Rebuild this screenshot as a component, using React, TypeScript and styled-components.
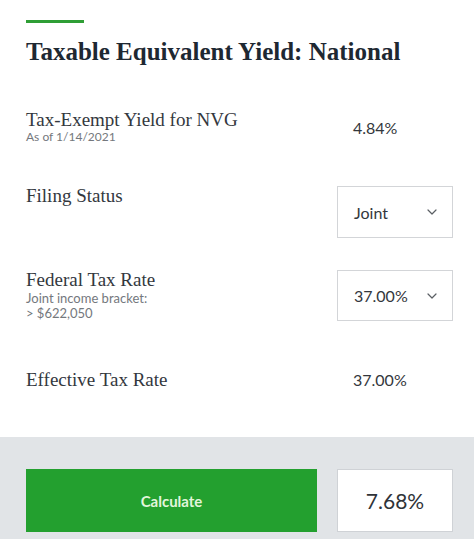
import React from "react";
import styled, { createGlobalStyle } from "styled-components";

const Global = createGlobalStyle`
  html, body { margin: 0; padding: 0; background: #ffffff; }
  body { font-family: "Lato", "Liberation Sans", sans-serif; }
  * { box-sizing: border-box; }
`;

const Page = styled.div`
  width: 474px;
  height: 539px;
  display: flex;
  flex-direction: column;
  background: #ffffff;
  overflow: hidden;
`;

const Main = styled.section`
  flex: 1;
  padding: 20px 21px 0 26px;
  display: flex;
  flex-direction: column;
`;

const Accent = styled.div`
  width: 58px;
  height: 3px;
  background: #2f9e35;
`;

const Title = styled.h1`
  margin: 13px 0 0;
  font-family: "Liberation Serif", serif;
  font-weight: 700;
  font-size: 25px;
  line-height: 32px;
  color: #1e2832;
`;

const Row = styled.div<{ $top: number; $center?: boolean }>`
  margin-top: ${(p) => p.$top}px;
  display: grid;
  grid-template-columns: 1fr 116px;
  align-items: ${(p) => (p.$center ? "center" : "start")};
`;

const LabelBlock = styled.div`
  display: flex;
  flex-direction: column;
`;

const Label = styled.div`
  font-family: "Liberation Serif", serif;
  font-size: 19px;
  line-height: 20px;
  color: #33383e;
`;

const Sub = styled.div<{ $size: number; $lh: number }>`
  font-family: "Lato", sans-serif;
  font-size: ${(p) => p.$size}px;
  line-height: ${(p) => p.$lh}px;
  color: #74787d;
`;

const Value = styled.div<{ $shift?: number }>`
  padding-left: 16px;
  padding-top: ${(p) => p.$shift ?? 0}px;
  font-family: "Lato", sans-serif;
  font-size: 16px;
  line-height: 20px;
  color: #33373c;
`;

const SelectBox = styled.button<{ $h: number }>`
  all: unset;
  box-sizing: border-box;
  width: 116px;
  height: ${(p) => p.$h}px;
  border: 1px solid #d3d5d8;
  background: #ffffff;
  display: flex;
  align-items: center;
  justify-content: space-between;
  padding: 0 15px 0 16px;
  font-family: "Lato", sans-serif;
  font-size: 16px;
  color: #33373c;
  cursor: pointer;
`;

const Chevron = () => (
  <svg width="10" height="6" viewBox="0 0 10 6" fill="none">
    <polyline
      points="1,1 5,5 9,1"
      stroke="#5b5f64"
      strokeWidth="1.2"
      strokeLinecap="round"
      strokeLinejoin="round"
    />
  </svg>
);

const Footer = styled.footer`
  height: 102px;
  background: #e1e4e7;
  padding: 32px 21px 7px 26px;
  display: grid;
  grid-template-columns: 1fr 116px;
  column-gap: 20px;
`;

const CalcButton = styled.button`
  all: unset;
  box-sizing: border-box;
  background: #23a02f;
  color: #e2f6dc;
  font-family: "Lato", sans-serif;
  font-weight: 700;
  font-size: 15px;
  display: flex;
  align-items: center;
  justify-content: center;
  height: 63px;
  cursor: pointer;
`;

const Result = styled.div`
  height: 63px;
  background: #ffffff;
  border: 1px solid #cfd2d6;
  display: flex;
  align-items: center;
  justify-content: center;
  font-family: "Lato", sans-serif;
  font-size: 21px;
  color: #2f3338;
`;

export default function App() {
  return (
    <>
      <Global />
      <Page>
        <Main>
          <Accent />
          <Title>Taxable Equivalent Yield: National</Title>

          <Row $top={42} $center>
            <LabelBlock>
              <Label>Tax-Exempt Yield for NVG</Label>
              <Sub $size={12} $lh={14}>As of 1/14/2021</Sub>
            </LabelBlock>
            <Value $shift={2}>4.84%</Value>
          </Row>

          <Row $top={42}>
            <LabelBlock>
              <Label>Filing Status</Label>
            </LabelBlock>
            <SelectBox $h={52}>
              <span>Joint</span>
              <Chevron />
            </SelectBox>
          </Row>

          <Row $top={32}>
            <LabelBlock>
              <Label>Federal Tax Rate</Label>
              <Sub $size={13} $lh={16}>Joint income bracket:</Sub>
              <Sub $size={13} $lh={14}>&gt; $622,050</Sub>
            </LabelBlock>
            <SelectBox $h={51}>
              <span>37.00%</span>
              <Chevron />
            </SelectBox>
          </Row>

          <Row $top={49} $center>
            <LabelBlock>
              <Label>Effective Tax Rate</Label>
            </LabelBlock>
            <Value>37.00%</Value>
          </Row>
        </Main>

        <Footer>
          <CalcButton>Calculate</CalcButton>
          <Result>7.68%</Result>
        </Footer>
      </Page>
    </>
  );
}
